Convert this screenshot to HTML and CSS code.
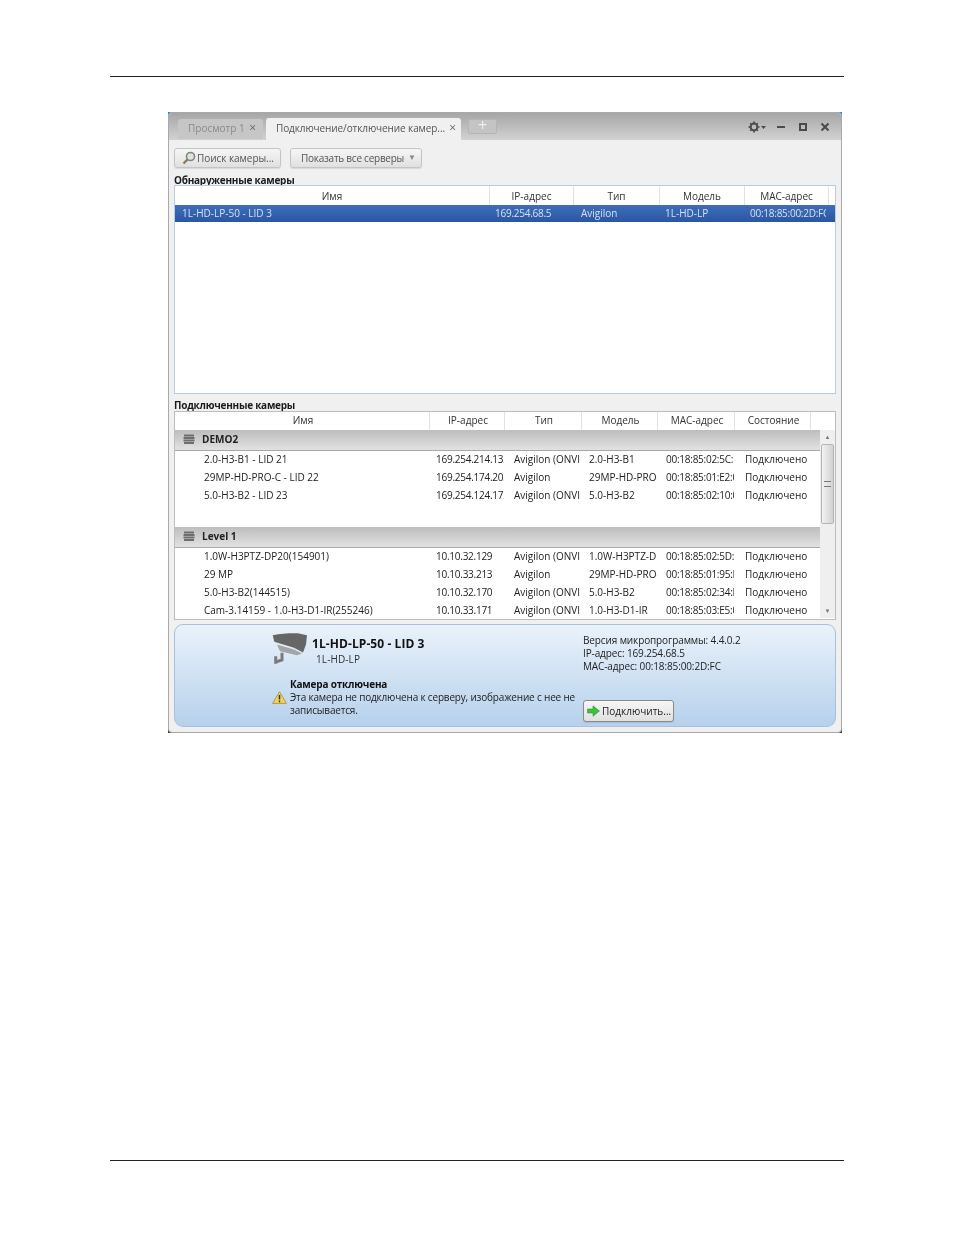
FILE: index.html
```html
<!DOCTYPE html>
<html lang="ru">
<head>
<meta charset="utf-8">
<title>Подключение/отключение камер</title>
<link rel="stylesheet" href="styles.css">
</head>
<body>
<div class="page">
  <div class="rule rule-top"></div>
  <div class="window">
    <div class="window-inner">
      <div class="tabbar">
        <div class="tab tab-off"><span>Просмотр 1</span><span class="x">×</span></div>
        <div class="tab tab-on"><span>Подключение/отключение камер...</span><span class="x">×</span></div>
        <div class="tab-add">+</div>
        <div class="win-controls">
          <svg class="ico-gear" width="18" height="12" viewBox="0 0 18 12"><circle cx="6" cy="6" r="3.4" fill="none" stroke="#4a4a4a" stroke-width="2"/><path d="M6 0.5v2M6 9.5v2M0.5 6h2M9.5 6h2M2.2 2.2l1.3 1.3M8.5 8.5l1.3 1.3M2.2 9.8l1.3-1.3M8.5 3.5l1.3-1.3" stroke="#4a4a4a" stroke-width="1.6"/><path d="M13 5h5l-2.5 3z" fill="#4a4a4a"/></svg>
          <svg width="10" height="10" viewBox="0 0 10 10"><rect x="1" y="4" width="8" height="2" fill="#4a4a4a"/></svg>
          <svg width="10" height="10" viewBox="0 0 10 10"><rect x="2" y="2" width="6" height="6" fill="none" stroke="#4a4a4a" stroke-width="2"/></svg>
          <svg width="10" height="10" viewBox="0 0 10 10"><path d="M1.5 1.5l7 7M8.5 1.5l-7 7" stroke="#4a4a4a" stroke-width="2"/></svg>
        </div>
      </div>
      <div class="content">
        <div class="toolbar">
          <div class="btn btn-search">
            <svg width="14" height="14" viewBox="0 0 14 14"><circle cx="8.5" cy="5.5" r="4" fill="#dfe3df" stroke="#7d8a7d" stroke-width="1.6"/><path d="M5.5 8.5L1.5 12.5" stroke="#8b7a5a" stroke-width="2.4"/></svg>
            <span>Поиск камеры...</span>
          </div>
          <div class="btn btn-servers"><span>Показать все серверы</span><span class="caret">▼</span></div>
        </div>
        <div class="section-title section-first">Обнаруженные камеры</div>
        <div class="table table-found">
          <div class="row head head-found cols-found">
            <div class="c c-center">Имя</div><div class="c c-center">IP-адрес</div><div class="c c-center">Тип</div><div class="c c-center">Модель</div><div class="c c-center">MAC-адрес</div>
          </div>
          <div class="row selected cols-found">
            <div class="c p-name">1L-HD-LP-50 - LID 3</div><div class="c p5 num">169.254.68.5</div><div class="c p7">Avigilon</div><div class="c p5">1L-HD-LP</div><div class="c p5 num">00:18:85:00:2D:FC</div>
          </div>
        </div>
        <div class="section-title section-second">Подключенные камеры</div>
        <div class="table table-conn">
          <div class="row head head-conn cols-conn">
            <div class="c c-center">Имя</div><div class="c c-center">IP-адрес</div><div class="c c-center">Тип</div><div class="c c-center">Модель</div><div class="c c-center">MAC-адрес</div><div class="c c-center">Состояние</div>
          </div>
          <div class="tree">
            <div class="tree-body">
              <div class="group">
                <svg width="12" height="12" viewBox="0 0 12 12"><path d="M1 2.5h10M0.5 5h11M0.5 7.5h11M1 10h10" stroke="#6e6e6e" stroke-width="2"/></svg>
                <span>DEMO2</span>
              </div>
              <div class="row item cols-tree"><div class="c p-tree">2.0-H3-B1 - LID 21</div><div class="c p6 num">169.254.214.133</div><div class="c p9">Avigilon (ONVIF)</div><div class="c p7">2.0-H3-B1</div><div class="c p8 num">00:18:85:02:5C:1A</div><div class="c p10">Подключено</div></div>
              <div class="row item cols-tree"><div class="c p-tree">29MP-HD-PRO-C - LID 22</div><div class="c p6 num">169.254.174.203</div><div class="c p9">Avigilon</div><div class="c p7">29MP-HD-PRO-C</div><div class="c p8 num">00:18:85:01:E2:0B</div><div class="c p10">Подключено</div></div>
              <div class="row item cols-tree"><div class="c p-tree">5.0-H3-B2 - LID 23</div><div class="c p6 num">169.254.124.172</div><div class="c p9">Avigilon (ONVIF)</div><div class="c p7">5.0-H3-B2</div><div class="c p8 num">00:18:85:02:10:0C</div><div class="c p10">Подключено</div></div>
              <div class="group group-second">
                <svg width="12" height="12" viewBox="0 0 12 12"><path d="M1 2.5h10M0.5 5h11M0.5 7.5h11M1 10h10" stroke="#6e6e6e" stroke-width="2"/></svg>
                <span>Level 1</span>
              </div>
              <div class="row item cols-tree"><div class="c p-tree">1.0W-H3PTZ-DP20(154901)</div><div class="c p6 num">10.10.32.129</div><div class="c p9">Avigilon (ONVIF)</div><div class="c p7">1.0W-H3PTZ-DP20</div><div class="c p8 num">00:18:85:02:5D:16</div><div class="c p10">Подключено</div></div>
              <div class="row item cols-tree"><div class="c p-tree">29 MP</div><div class="c p6 num">10.10.33.213</div><div class="c p9">Avigilon</div><div class="c p7">29MP-HD-PRO-C</div><div class="c p8 num">00:18:85:01:95:B2</div><div class="c p10">Подключено</div></div>
              <div class="row item cols-tree"><div class="c p-tree">5.0-H3-B2(144515)</div><div class="c p6 num">10.10.32.170</div><div class="c p9">Avigilon (ONVIF)</div><div class="c p7">5.0-H3-B2</div><div class="c p8 num">00:18:85:02:34:D3</div><div class="c p10">Подключено</div></div>
              <div class="row item cols-tree"><div class="c p-tree">Cam-3.14159 - 1.0-H3-D1-IR(255246)</div><div class="c p6 num">10.10.33.171</div><div class="c p9">Avigilon (ONVIF)</div><div class="c p7">1.0-H3-D1-IR</div><div class="c p8 num">00:18:85:03:E5:0A</div><div class="c p10">Подключено</div></div>
            </div>
            <div class="scrollbar">
              <div class="arrow">▲</div>
              <div class="thumb"><span class="grip"></span></div>
              <div class="arrow arrow-down">▼</div>
            </div>
          </div>
        </div>
        <div class="details">
          <div class="details-left">
            <div class="cam-line">
              <svg width="36" height="33" viewBox="2 1.5 36 33"><path d="M2.7 3.7C11 2 20 1.5 27.7 1.7L37 3.7L36 13L33 21L24 16.3L4.3 10.3z" fill="#666"/><path d="M7 13L24 18L32 22L27 23.7L10 19.7z" fill="#a5a5a5"/><path d="M5.7 24.7V32.3M5.7 30.5L12 28.5V21.3" fill="none" stroke="#7b7b7b" stroke-width="3"/></svg>
              <div class="cam-text">
                <div class="cam-name">1L-HD-LP-50 - LID 3</div>
                <div class="cam-model">1L-HD-LP</div>
              </div>
            </div>
            <div class="status">
              <svg class="warn" width="15" height="13" viewBox="0 0 15 13"><path d="M7.5 0.8L14.4 12.4H0.6z" fill="#f3d35a" stroke="#a89a5a"/><path d="M7.5 4v4.5M7.5 9.6v1.6" stroke="#333" stroke-width="1.5"/></svg>
              <div class="status-text">
                <div class="status-title">Камера отключена</div>
                <div>Эта камера не подключена к серверу, изображение с нее не записывается.</div>
              </div>
            </div>
          </div>
          <div class="details-right">
            <div class="info">
              <div>Версия микропрограммы: 4.4.0.2</div>
              <div>IP-адрес: 169.254.68.5</div>
              <div>MAC-адрес: 00:18:85:00:2D:FC</div>
            </div>
            <div class="btn btn-connect">
              <svg width="13" height="12" viewBox="0 0 13 12"><path d="M0.5 4h5.5V0.8L12.5 6 6 11.2V8H0.5z" fill="#3fbf3f" stroke="#2c9a2c" stroke-width="0.6"/></svg>
              <span>Подключить...</span>
            </div>
          </div>
        </div>
      </div>
    </div>
  </div>
  <div class="rule rule-bottom"></div>
</div>
</body>
</html>
```
FILE: styles.css
```css
* { box-sizing: border-box; }
html, body { margin: 0; padding: 0; background: #fff; }
body { font-family: "Open Sans", "Noto Sans", sans-serif; font-size: 10px; color: #222; }
.page { width: 954px; height: 1235px; padding-top: 76px; overflow: hidden; }
.rule { height: 1px; background: #222; margin-left: 110px; width: 734px; }
.rule-bottom { margin-top: 427px; }
.window { width: 674px; height: 621px; margin: 35px 0 0 168px; background: linear-gradient(#3d83c8 0, #9a9a9a 10%, #9a9a9a 90%, #4a3a20 100%); }
.window-inner { height: 100%; background: #f0f0f0; border: 1px solid #a9a9a9; border-radius: 4px; overflow: hidden; display: flex; flex-direction: column; filter: blur(0.35px); }
.tabbar { height: 27px; flex: none; display: flex; align-items: flex-end; padding-left: 9px; background: linear-gradient(#a6a6a6, #d2d2d2); }
.tab { display: flex; align-items: center; justify-content: space-between; border-radius: 3px 3px 0 0; white-space: nowrap; line-height: 12px; }
.tab > span:first-child { margin-top: -2px; }
.tab .x { font-size: 12px; color: #666; line-height: 1; margin-top: -2px; }
.tab-off { width: 85px; height: 20px; margin-bottom: 1px; padding: 0 7px 0 10px; background: #c6c6c6; color: #8a8a8a; }
.tab-on { width: 195px; height: 22px; margin-left: 3px; padding: 0 5px 0 10px; background: #f0f0f0; color: #555; letter-spacing: -0.1px; }
.tab-add { width: 29px; height: 15px; margin: 0 0 6px 7px; border-radius: 2px; background: #c4c4c4; border: 1px solid #b5b5b5; color: #eee; font-size: 16px; line-height: 11px; text-align: center; }
.win-controls { margin-left: auto; display: flex; align-items: center; gap: 12px; padding: 0 11px 7px 0; }
.ico-gear { margin-right: -2px; }
.content { flex: 1; padding: 8px 5px 0; display: flex; flex-direction: column; }
.toolbar { display: flex; gap: 9px; height: 20px; }
.btn { display: flex; align-items: center; height: 20px; border: 1px solid #c4c4c4; border-radius: 3px; background: linear-gradient(#f6f6f6, #e0e0e0); color: #555; box-shadow: 0 1px 1px rgba(0,0,0,.1); white-space: nowrap; }
.btn-search { width: 107px; padding-left: 7px; gap: 1px; letter-spacing: -0.05px; }
.btn-servers { width: 132px; padding-left: 10px; gap: 4px; letter-spacing: -0.25px; }
.caret { font-size: 8px; color: #888; margin-top: -3px; }
.section-title { height: 12px; line-height: 13px; font-weight: 700; color: #1c1c1c; letter-spacing: -0.25px; }
.section-first { margin-top: 6px; height: 11px; }
.section-second { margin-top: 5px; }
.table { width: 662px; background: #fff; border: 1px solid #b9cde0; flex: none; overflow: hidden; }
.table-found { height: 209px; }
.table-conn { height: 209px; border-color: #bdbdbd; }
.row { display: grid; height: 18px; line-height: 18px; }
.item { line-height: 16px; }
.cols-found { grid-template-columns: 315px 84px 86px 85px 84px; }
.cols-conn { grid-template-columns: 255px 75px 77px 76px 77px 76px; }
.cols-tree { grid-template-columns: 255px 75px 77px 76px 77px 85px; }
.c { overflow: hidden; white-space: nowrap; }
.item .c { margin-right: 1px; }
.num { letter-spacing: -0.25px; }
.head { background: #fff; color: #333; height: 19px; }
.head .c { border-right: 1px solid #e2e2e2; }
.head-found { line-height: 20px; }
.head-conn { line-height: 16px; }
.head-conn .c { padding-left: 2px; }
.c-center { text-align: center; }
.selected { height: 17px; line-height: 17px; background: linear-gradient(#3f6fb8, #2a56a4); color: #d5e0f2; }
.selected .c { margin-right: 3px; }
.p-name { padding-left: 7px; }
.p-tree { padding-left: 29px; }
.p5 { padding-left: 5px; }
.p6 { padding-left: 6px; }
.p7 { padding-left: 7px; }
.p8 { padding-left: 8px; }
.p9 { padding-left: 9px; }
.p10 { padding-left: 10px; }
.tree { display: flex; height: 188px; margin-top: -1px; }
.tree-body { width: 645px; flex: none; }
.group { height: 21px; display: flex; align-items: center; gap: 7px; padding: 0 0 2px 8px; background: linear-gradient(#bdbdbd, #e2e2e2); border-bottom: 1px solid #a8a8a8; font-weight: 700; color: #222; }
.group-second { margin-top: 22px; }
.scrollbar { width: 15px; flex: none; background: #efefef; display: flex; flex-direction: column; align-items: center; }
.arrow { height: 14px; line-height: 14px; font-size: 6px; color: #777; flex: none; }
.arrow-down { margin-top: auto; }
.thumb { width: 13px; height: 80px; background: linear-gradient(90deg, #f2f2f2, #d2d2d2); border: 1px solid #b5b5b5; border-radius: 2px; display: flex; align-items: center; justify-content: center; }
.grip { width: 7px; height: 6px; border-top: 1px solid #777; border-bottom: 1px solid #777; background: linear-gradient(transparent 40%, #777 40%, #777 60%, transparent 60%); }
.details { width: 662px; height: 103px; margin-top: 4px; flex: none; display: flex; border: 1px solid #a9c0d8; border-radius: 9px; background: linear-gradient(#eaf2fa, #b6d1ec); color: #222; }
.details-left { width: 408px; padding: 8px 0 0 97px; flex: none; }
.cam-line { display: flex; gap: 4px; }
.cam-text { padding-top: 3px; }
.cam-name { font-weight: 700; font-size: 12px; line-height: 16px; color: #111; letter-spacing: 0.08px; }
.cam-model { line-height: 14px; padding-left: 4px; color: #333; letter-spacing: 0.1px; }
.status { display: flex; align-items: center; gap: 3px; margin-top: 12px; }
.warn { flex: none; }
.status-text { width: 288px; flex: none; line-height: 13px; letter-spacing: -0.18px; }
.status-title { font-weight: 700; color: #111; letter-spacing: -0.2px; }
.details-right { flex: 1; }
.info { padding-top: 9px; line-height: 13px; letter-spacing: -0.12px; }
.btn-connect { width: 91px; height: 22px; margin-top: 27px; padding-left: 3px; gap: 2px; border-color: #8a8a8a; color: #222; }
```
